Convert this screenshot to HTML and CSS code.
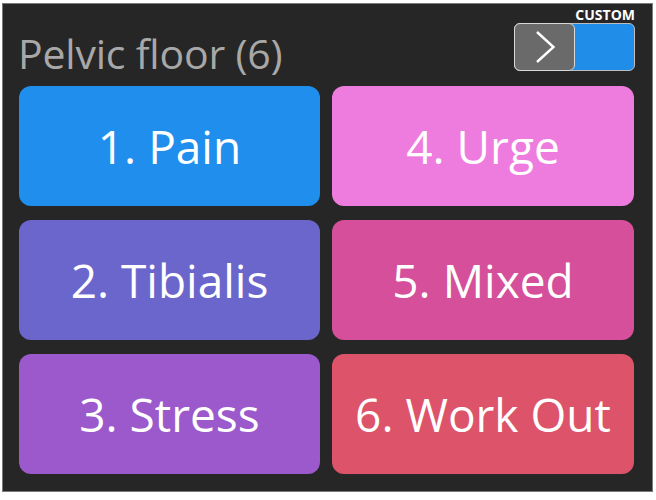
FILE: index.html
```html
<!DOCTYPE html>
<html lang="en">

<head>
    <meta charset="UTF-8" />
    <title>Pelvic floor</title>
    <link rel="stylesheet" href="styles.css">
</head>

<body>
    <div class="screen">
        <header class="header">
            <h1 class="title">Pelvic floor (6)</h1>
            <div class="custom">
                <span class="custom-label">CUSTOM</span>
                <div class="toggle">
                    <div class="knob">
                        <svg width="24" height="36" viewBox="0 0 24 36">
                            <path d="M4 3 L20.5 18 L4 33" fill="none" stroke="#fff" stroke-width="2.4" />
                        </svg>
                    </div>
                </div>
            </div>
        </header>

        <div class="programs">
            <button class="prog pain">1. Pain</button>
            <button class="prog urge">4. Urge</button>
            <button class="prog tibialis">2. Tibialis</button>
            <button class="prog mixed">5. Mixed</button>
            <button class="prog stress">3. Stress</button>
            <button class="prog workout">6. Work Out</button>
        </div>
    </div>
</body>

</html>
```
FILE: styles.css
```css
* {
    box-sizing: border-box;
    margin: 0;
    padding: 0;
}

body {
    background: #fff;
    padding: 3px 2px;
    font-family: "Open Sans", "Noto Sans", sans-serif;
}

.screen {
    background: #262626;
    border: 1px solid #7a7a7a;
    width: 651px;
    height: 489px;
    display: flex;
    flex-direction: column;
}

.header {
    height: 82px;
    display: flex;
    justify-content: space-between;
    align-items: flex-start;
    padding: 0 17px 0 15px;
}

.title {
    font-weight: normal;
    font-size: 41px;
    color: #a8a8a8;
    margin-top: 21px;
    letter-spacing: -0.2px;
}

.custom {
    display: flex;
    flex-direction: column;
    align-items: flex-end;
}

.custom-label {
    color: #fff;
    font-weight: bold;
    font-size: 14px;
    margin-top: 4px;
    line-height: 14px;
}

.toggle {
    margin-top: 1px;
    width: 121px;
    height: 48px;
    background: #208de9;
    border-radius: 6px;
    border: 1px solid #bdbdbd;
    display: flex;
}

.knob {
    width: 61px;
    height: 48px;
    margin: -1px 0 0 -1px;
    background: #6a6a6a;
    border: 1px solid #d8d8d8;
    border-radius: 6px;
    display: flex;
    align-items: center;
    justify-content: center;
}

.programs {
    display: grid;
    grid-template-columns: 301px 302px;
    grid-template-rows: repeat(3, 120px);
    column-gap: 12px;
    row-gap: 14px;
    padding-left: 16px;
}

.prog {
    border: none;
    border-radius: 12px;
    color: #fff;
    font-family: "Open Sans", "Noto Sans", sans-serif;
    font-size: 46px;
    cursor: pointer;
}

.pain {
    background: #1f8eec;
}

.urge {
    background: #ee7cde;
}

.tibialis {
    background: #6b66cc;
}

.mixed {
    background: #d54f9b;
}

.stress {
    background: #9b59cc;
}

.workout {
    background: #dd5369;
}
```
